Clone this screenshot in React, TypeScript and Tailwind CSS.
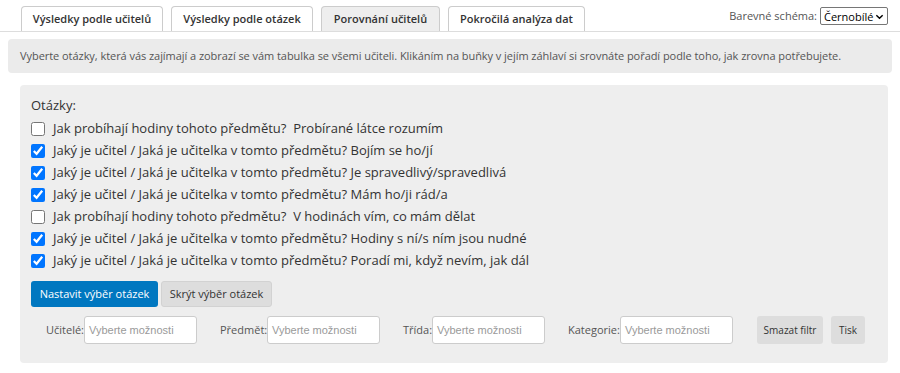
import React from "react";

const questions: [string, boolean][] = [
  ["Jak probíhají hodiny tohoto předmětu?\u00a0 Probírané látce rozumím", false],
  ["Jaký je učitel / Jaká je učitelka v tomto předmětu? Bojím se ho/jí", true],
  ["Jaký je učitel / Jaká je učitelka v tomto předmětu? Je spravedlivý/spravedlivá", true],
  ["Jaký je učitel / Jaká je učitelka v tomto předmětu? Mám ho/ji rád/a", true],
  ["Jak probíhají hodiny tohoto předmětu?\u00a0 V hodinách vím, co mám dělat", false],
  ["Jaký je učitel / Jaká je učitelka v tomto předmětu? Hodiny s ní/s ním jsou nudné", true],
  ["Jaký je učitel / Jaká je učitelka v tomto předmětu? Poradí mi, když nevím, jak dál", true],
];

const tabs = [
  { label: "Výsledky podle učitelů", w: "w-[142px]", active: false },
  { label: "Výsledky podle otázek", w: "w-[142px]", active: false },
  { label: "Porovnání učitelů", w: "w-[119px]", active: true },
  { label: "Pokročilá analýza dat", w: "w-[137px]", active: false },
];

function Filter({ label, ml, w }: { label: string; ml: string; w: string }) {
  return (
    <div className={`flex items-center ${ml}`}>
      <span className={`text-[11px] text-[#555] ${w}`}>{label}</span>
      <div className="w-[113px] h-[28px] bg-white border border-[#ccc] rounded-[3px] flex items-center px-[4px]">
        <span className="text-[11px] text-[#9a9a9a] font-['Liberation_Sans',sans-serif]">Vyberte možnosti</span>
      </div>
    </div>
  );
}

export default function App() {
  return (
    <div className="w-[900px] h-[373px] bg-white font-['Open_Sans',sans-serif] text-[#333] relative">
      {/* tabs row */}
      <div className="flex items-end pt-[7px] pl-[21px] pr-[12px] border-b border-[#ddd] h-[32px]">
        {tabs.map((t) => (
          <div
            key={t.label}
            className={`${t.w} h-[25px] mr-[8px] border border-[#ccc] border-b-0 rounded-t-[4px] flex items-center justify-center text-[11px] font-semibold text-[#333] ${t.active ? "bg-[#eee]" : "bg-white"}`}
          >
            {t.label}
          </div>
        ))}
        <div className="ml-auto self-start flex items-center">
          <span className="text-[11px] text-[#555] mr-[3px]">Barevné schéma:</span>
          <div className="h-[18px] w-[68px] border border-[#767676] rounded-[2px] flex items-center pl-[3px] pr-[3px] bg-white">
            <span className="text-[11px] text-black leading-none">Černobílé</span>
            <svg width="9" height="9" viewBox="0 0 10 10" className="ml-auto">
              <path d="M1.5 3.5 L5 7 L8.5 3.5" fill="none" stroke="#000" strokeWidth="1.6" />
            </svg>
          </div>
        </div>
      </div>

      {/* info box */}
      <div className="mx-[8px] mt-[7px] h-[34px] bg-[#ebebeb] rounded-[4px] flex items-center pl-[12px]">
        <span className="text-[11px] text-[#555] whitespace-nowrap tracking-[-0.05px]">
          Vyberte otázky, která vás zajímají a zobrazí se vám tabulka se všemi učiteli. Klikáním na buňky v jejím záhlaví si srovnáte pořadí podle toho, jak zrovna potřebujete.
        </span>
      </div>

      {/* main panel */}
      <div className="ml-[20px] mr-[12px] mt-[12px] h-[278px] bg-[#eee] rounded-[4px] pt-[10px] pl-[11px]">
        <div className="text-[13px] text-[#333] leading-[20px]">Otázky:</div>
        <div className="flex flex-col mt-[3px]">
          {questions.map(([q, c], i) => (
            <label key={i} className="flex items-center h-[22px]">
              <input type="checkbox" defaultChecked={c} className="w-[14px] h-[14px] m-0 mr-[8px]" />
              <span className="text-[13px] text-[#333] whitespace-pre">{q}</span>
            </label>
          ))}
        </div>
        <div className="flex mt-[9px] gap-[3px]">
          <div className="h-[26px] w-[127px] bg-[#0077c0] rounded-[3px] flex items-center justify-center text-white text-[11px]">
            Nastavit výběr otázek
          </div>
          <div className="h-[26px] w-[111px] bg-[#ddd] border border-[#d2d2d2] rounded-[3px] flex items-center justify-center text-[#333] text-[11px]">
            Skrýt výběr otázek
          </div>
        </div>
        <div className="flex items-center mt-[9px]">
          <Filter label="Učitelé:" ml="ml-[15px]" w="w-[38px]" />
          <Filter label="Předmět:" ml="ml-[23px]" w="w-[47px]" />
          <Filter label="Třída:" ml="ml-[23px]" w="w-[29px]" />
          <Filter label="Kategorie:" ml="ml-[23px]" w="w-[52px]" />
          <div className="ml-[24px] h-[28px] w-[66px] bg-[#ddd] rounded-[3px] flex items-center justify-center text-[10px] text-[#333]">
            Smazat filtr
          </div>
          <div className="ml-[8px] h-[28px] w-[34px] bg-[#ddd] rounded-[3px] flex items-center justify-center text-[10px] text-[#333]">
            Tisk
          </div>
        </div>
      </div>
    </div>
  );
}
